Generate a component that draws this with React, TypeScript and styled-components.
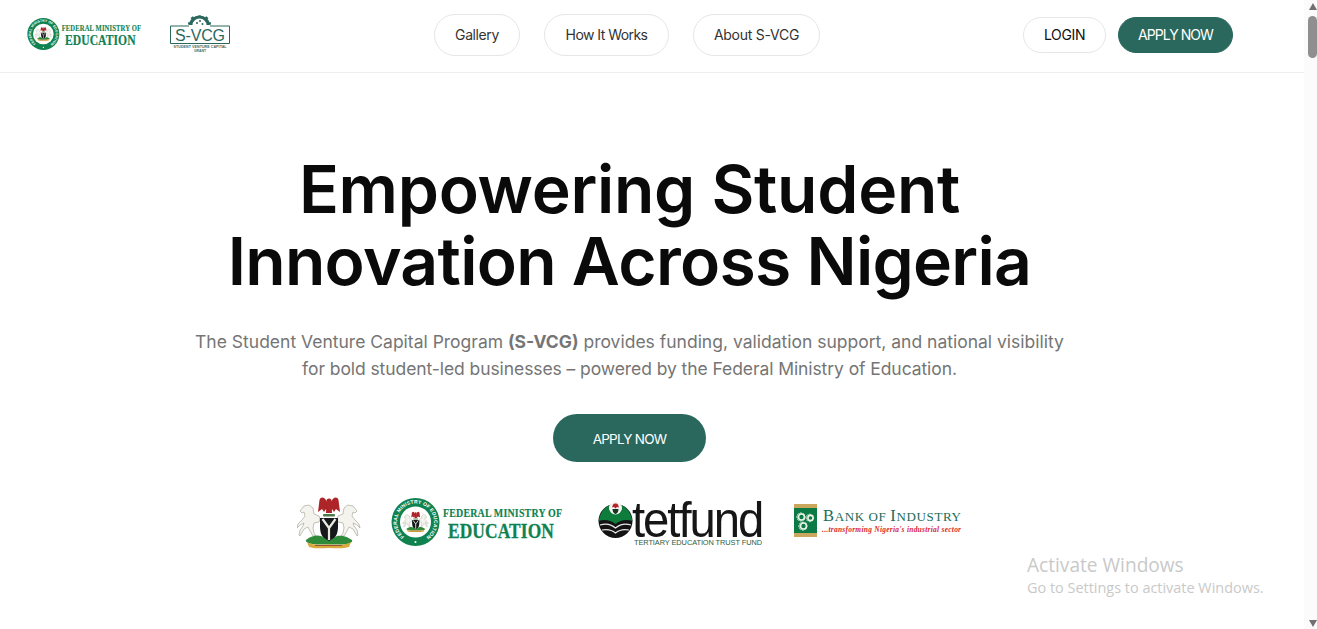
import React from "react";
import styled, { createGlobalStyle } from "styled-components";

const Global = createGlobalStyle`
  html, body { margin: 0; padding: 0; height: 100%; overflow: hidden; background: #fff; }
  body { font-family: "Inter", "Liberation Sans", sans-serif; }
  #root { height: 100%; }
`;

const Shell = styled.div`
  position: relative;
  display: flex;
  height: 100vh;
  overflow: hidden;
  background: #fff;
`;
const Page = styled.div`
  flex: 1;
  min-width: 0;
  display: flex;
  flex-direction: column;
`;
const Header = styled.header`
  height: 70px;
  flex: none;
  box-sizing: content-box;
  border-bottom: 1px solid #efefef;
  padding: 0 71px 2px 27px;
  display: flex;
  align-items: center;
  justify-content: space-between;
`;
const Brand = styled.div`
  display: flex;
  align-items: center;
  gap: 26px;
  width: 204px;
`;
const Nav = styled.nav`
  display: flex;
  gap: 24px;
`;
const NavPill = styled.a<{ $w: number; $spacing: number }>`
  box-sizing: border-box;
  width: ${(p) => p.$w}px;
  height: 42px;
  border: 1px solid #e6e6e6;
  border-radius: 21px;
  display: flex;
  align-items: center;
  justify-content: center;
  padding-bottom: 1px;
  font-size: 14px;
  font-weight: 400;
  letter-spacing: ${(p) => p.$spacing}px;
  color: #333;
`;
const Actions = styled.div`
  display: flex;
  align-items: center;
  gap: 12px;
`;
const ActionButton = styled.a<{ $primary?: boolean; $w: number }>`
  box-sizing: border-box;
  width: ${(p) => p.$w}px;
  height: 36px;
  border-radius: 18px;
  display: flex;
  align-items: center;
  justify-content: center;
  padding-bottom: 1px;
  font-size: 14px;
  letter-spacing: ${(p) => (p.$primary ? "-0.95px" : "-0.35px")};
  font-weight: 400;
  color: ${(p) => (p.$primary ? "#fff" : "#111")};
  background: ${(p) => (p.$primary ? "#2a685e" : "#fff")};
  border: 1px solid ${(p) => (p.$primary ? "#2a685e" : "#e6e6e6")};
`;
const Hero = styled.main`
  padding: 80px 45px 0 0;
  display: flex;
  flex-direction: column;
  align-items: center;
`;
const Title = styled.h1`
  margin: 0;
  font-size: 66px;
  line-height: 72px;
  font-weight: 620;
  color: #0a0a0a;
  text-align: center;
`;
const TitleLine = styled.span<{ $spacing: number }>`
  display: block;
  letter-spacing: ${(p) => p.$spacing}px;
`;
const Lead = styled.p`
  margin: 31px 0 0;
  font-size: 17.5px;
  line-height: 27px;
  font-weight: 400;
  color: #757575;
  text-align: center;
  b { font-weight: 700; color: #757575; }
`;
const LeadLine = styled.span<{ $spacing: number }>`
  display: block;
  letter-spacing: ${(p) => p.$spacing}px;
`;
const Cta = styled.a`
  box-sizing: border-box;
  margin-top: 32px;
  width: 153px;
  height: 48px;
  padding-top: 1px;
  border-radius: 24px;
  background: #2a685e;
  color: #fff;
  display: flex;
  align-items: center;
  justify-content: center;
  font-size: 13.5px;
  letter-spacing: -0.75px;
`;
const Partners = styled.div`
  margin-top: 29px;
  display: flex;
  align-items: center;
  gap: 30px;
`;
const Watermark = styled.div`
  position: absolute;
  left: 1027px;
  top: 552px;
  font-family: "Open Sans", "Noto Sans", sans-serif;
  color: #c9c9c9;
`;
const WatermarkTitle = styled.div`
  font-size: 19.1px;
  line-height: 26px;
`;
const WatermarkSub = styled.div`
  font-size: 14.45px;
  line-height: 20px;
`;
const Scrollbar = styled.aside`
  flex: none;
  width: 13px;
  background: #fbfbfb;
  position: relative;
`;
const Thumb = styled.div`
  position: absolute;
  top: 16px;
  right: 0;
  width: 9px;
  height: 42px;
  border-radius: 5px;
  background: #8f8f8f;
`;
const ArrowUp = styled.div`
  position: absolute;
  top: 3px;
  right: 0;
  width: 0;
  height: 0;
  border-left: 4.5px solid transparent;
  border-right: 4.5px solid transparent;
  border-bottom: 7px solid #707070;
`;
const ArrowDown = styled(ArrowUp)`
  top: 620px;
  border-bottom: 0;
  border-top: 7px solid #707070;
`;

const HORSE = "M5 16l4-5 5-1 4 3 1 6 5 2 1 3-1 3-5 1-1 5 1 5 2 3h-3l-3-5-2-4-4 2-3 5-1 2-1-1 1-5 3-4 1-3-4 2-3 3 1-4 4-4 3-4-1-4-2 1z";
const WING = "M30.500 8C28 2 24 1 22.500 5L21 17l4-3 2 3 2-3 2 3z";
const SHIELD = "M23 23h18v9c0 8-4 13-9 15-5-2-9-7-9-15z";

const ArmsArt = ({ stroke = 0.7 }: { stroke?: number }) => (
  <>
    <path d={HORSE} transform="translate(-2 0)" fill="#f4f3ee" stroke="#a9a99f" strokeWidth={stroke} />
    <path d={HORSE} transform="translate(65 0) scale(-1 1)" fill="#f4f3ee" stroke="#a9a99f" strokeWidth={stroke} />
    <path d={WING} fill="#ad2528" />
    <path d={WING} transform="translate(64 0) scale(-1 1)" fill="#ad2528" />
    <circle cx="32" cy="6" r="2.600" fill="#ad2528" />
    <path d="M29.500 8h5l.5 10h-6z" fill="#ad2528" />
    <rect x="26" y="19" width="12" height="2.600" rx="1" fill="#4c7a4a" />
    <path d={SHIELD} fill="#15181a" />
    <path d="M25.500 24l6.500 9 6.500-9M32 33v12" stroke="#e9e9e2" strokeWidth="2.200" fill="none" />
    <path d="M9 45c6-5 12-5 15-4l8 5 8-5c4-1 10 0 15 4 1 2-2 4-8 4.500H19c-7-.500-11-2.500-10-4.500z" fill="#2f8a3a" />
    <path d="M10 47c7 4 13 2.500 21 2.500S47 51 54 47l-2 5c-6 2-13 1-20 1s-15 1-20-1z" fill="#d9a93f" />
    <path d="M18 50.500h27" stroke="#8f3a2c" strokeWidth=".8" />
  </>
);

const Arms = ({ width }: { width: number }) => (
  <svg width={width} height={(width * 56) / 64} viewBox="0 0 64 56" aria-hidden>
    <ArmsArt />
  </svg>
);

const FmeLogo = ({ width, id }: { width: number; id: string }) => (
  <svg width={width} height={(width * 56) / 176} viewBox="0 0 176 56" aria-hidden>
    <defs>
      <path id={id} d="M6 27a18.500 18.500 0 1 1 37 0 18.500 18.500 0 1 1-37 0" />
    </defs>
    <circle cx="24.500" cy="27" r="24" fill="#0f8250" />
    <circle cx="24.500" cy="27" r="15.500" fill="#fff" />
    <g transform="rotate(-52 24.500 27)">
      <text fontFamily="'Liberation Sans', sans-serif" fontSize="5" fontWeight="700" fill="#fff">
        <textPath href={`#${id}`} textLength="92">FEDERAL MINISTRY OF EDUCATION</textPath>
      </text>
    </g>
    <circle cx="24.500" cy="47" r="1" fill="#fff" />
    <g transform="translate(11.900 15.800) scale(.4)">
      <ArmsArt stroke={1} />
    </g>
    <text transform="translate(52 22) scale(.735 1)" fontFamily="'Liberation Serif', serif" fontWeight="700" fontSize="13.500" fill="#0f8250" stroke="#0f8250" strokeWidth=".2" textLength="162">FEDERAL MINISTRY OF</text>
    <text transform="translate(57 43) scale(.79 1)" fontFamily="'Liberation Serif', serif" fontWeight="700" fontSize="22" fill="#0f8250" stroke="#0f8250" strokeWidth=".3" textLength="134">EDUCATION</text>
  </svg>
);

const SvcgLogo = () => (
  <svg width="60" height="40" viewBox="0 0 60 40" aria-hidden>
    <g fill="#2a685e">
      <path d="M19 10a10.500 9.500 0 0 1 21 0h-3.500a7 6.500 0 0 0-14 0z" />
      <path d="M28 .5h3v2.500h-3zM20.500 3l2.300-1.800 1.800 2-2.200 1.800zM38.500 3l-2.300-1.800-1.800 2 2.200 1.800zM17.800 7.500l3-.6.500 2.300-3 .6zM41.200 7.500l-3-.6-.5 2.300 3 .6z" />
      <circle cx="27" cy="8" r="1" /><circle cx="30" cy="6" r="1" /><circle cx="32.500" cy="9" r="1" />
    </g>
    <path d="M19 11H.5v17.500h59V11H40" fill="none" stroke="#2a685e" strokeWidth="1" />
    <text x="5" y="26" fontFamily="'Liberation Sans', sans-serif" fontSize="16" fill="#2a685e" textLength="50">S-VCG</text>
    <text x="3.500" y="33.300" fontFamily="'Liberation Sans', sans-serif" fontWeight="700" fontSize="3.600" fill="#3d6b63" textLength="53">STUDENT VENTURE CAPITAL</text>
    <text x="30" y="37.300" textAnchor="middle" fontFamily="'Liberation Sans', sans-serif" fontWeight="700" fontSize="3.400" fill="#3d6b63">GRANT</text>
  </svg>
);

const TetfundLogo = () => (
  <svg width="166" height="64" viewBox="0 -4 166 64" aria-hidden>
    <circle cx="18.500" cy="26" r="17" fill="#131313" />
    <path d="M1.500 26C4 14 11 9 18.500 9S33 14 35.500 26c-6-2-12-1-17 3-5-4-11-5-17-3z" fill="#0e7d3c" />
    <path d="M3 30c6-2 11-1 15.500 3C23 29 28 28 34 30M5 35c5-1 10 0 13.500 3 3.500-3 8.500-4 13.500-3" stroke="#e8e8e8" strokeWidth="1.200" fill="none" />
    <circle cx="18.500" cy="13" r="6.500" fill="#f4f4f0" />
    <path d="M16 9.500c1-1.500 4-1.500 5 0l1 3-2-.5-1.500 1.500-1.500-1.500-2 .5z" fill="#b2262a" />
    <path d="M15.500 14h6c0 3-1.500 4.500-3 5-1.500-.5-3-2-3-5z" fill="#14351f" />
    <text transform="translate(35 42) scale(.945 1)" fontFamily="'Liberation Sans', sans-serif" fontSize="50" fill="#161616" textLength="140">tetfund</text>
    <text x="37" y="49.500" fontFamily="'Liberation Sans', sans-serif" fontSize="7.400" fill="#2f5a3a" textLength="128">TERTIARY EDUCATION TRUST FUND</text>
  </svg>
);

const GEAR = "M5 0h2l.4 1.600 1.400.6 1.400-.9 1.400 1.400-.9 1.400.6 1.400L13 5.900v2l-1.600.4-.6 1.400.9 1.400-1.400 1.400-1.400-.9-1.400.6L7 13.900H5l-.4-1.600-1.400-.6-1.400.9L.4 11.200l.9-1.400-.6-1.400L-1 8V6l1.600-.4.6-1.400-.9-1.400L1.700 1.400l1.400.9 1.500-.7z";

const BoiLogo = () => (
  <svg width="170" height="56" viewBox="0 0 170 56" aria-hidden>
    <rect x="1" y="9" width="23" height="33" fill="#c9a75c" />
    <rect x="1" y="13" width="23" height="25" fill="#0c7a45" />
    <g fill="none" stroke="#e9f2e6" strokeWidth="1.600">
      <circle cx="8.500" cy="22" r="3" />
      <circle cx="17.500" cy="23" r="2.600" />
      <circle cx="10.500" cy="31" r="3" />
    </g>
    <path d={GEAR} transform="translate(4.300 17.800) scale(.6)" fill="none" stroke="#e9f2e6" strokeWidth="1.200" />
    <path d={GEAR} transform="translate(13.500 19) scale(.55)" fill="none" stroke="#e9f2e6" strokeWidth="1.200" />
    <path d={GEAR} transform="translate(6.300 27) scale(.6)" fill="none" stroke="#e9f2e6" strokeWidth="1.200" />
    <text x="30" y="26" fontFamily="'Liberation Serif', serif" fill="#1c6c58" textLength="138" fontSize="13">
      <tspan fontSize="16.500">B</tspan>ANK OF <tspan fontSize="16.500">I</tspan>NDUSTRY
    </text>
    <text x="29" y="37" fontFamily="'Liberation Serif', serif" fontWeight="700" fontStyle="italic" fontSize="7.400" fill="#d81f2e" textLength="139">...transforming Nigeria's industrial sector</text>
  </svg>
);

export default function App() {
  return (
    <Shell>
      <Global />
      <Page>
        <Header>
          <Brand>
            <FmeLogo width={117.300} id="sealHeader" />
            <SvcgLogo />
          </Brand>
          <Nav>
            <NavPill $w={86} $spacing={-0.4}>Gallery</NavPill>
            <NavPill $w={125} $spacing={-0.55}>How It Works</NavPill>
            <NavPill $w={127} $spacing={-0.25}>About S-VCG</NavPill>
          </Nav>
          <Actions>
            <ActionButton $w={83}>LOGIN</ActionButton>
            <ActionButton $w={115} $primary>APPLY NOW</ActionButton>
          </Actions>
        </Header>
        <Hero>
          <Title>
            <TitleLine $spacing={-0.28}>Empowering Student</TitleLine>
            <TitleLine $spacing={-0.7}>Innovation Across Nigeria</TitleLine>
          </Title>
          <Lead>
            <LeadLine $spacing={0}>The Student Venture Capital Program <b>(S-VCG)</b> provides funding, validation support, and national visibility</LeadLine>
            <LeadLine $spacing={-0.08}>for bold student-led businesses – powered by the Federal Ministry of Education.</LeadLine>
          </Lead>
          <Cta>APPLY NOW</Cta>
          <Partners>
            <Arms width={64} />
            <FmeLogo width={176} id="sealPartner" />
            <TetfundLogo />
            <BoiLogo />
          </Partners>
        </Hero>
      </Page>
      <Scrollbar>
        <ArrowUp />
        <Thumb />
        <ArrowDown />
      </Scrollbar>
      <Watermark>
        <WatermarkTitle>Activate Windows</WatermarkTitle>
        <WatermarkSub>Go to Settings to activate Windows.</WatermarkSub>
      </Watermark>
    </Shell>
  );
}
